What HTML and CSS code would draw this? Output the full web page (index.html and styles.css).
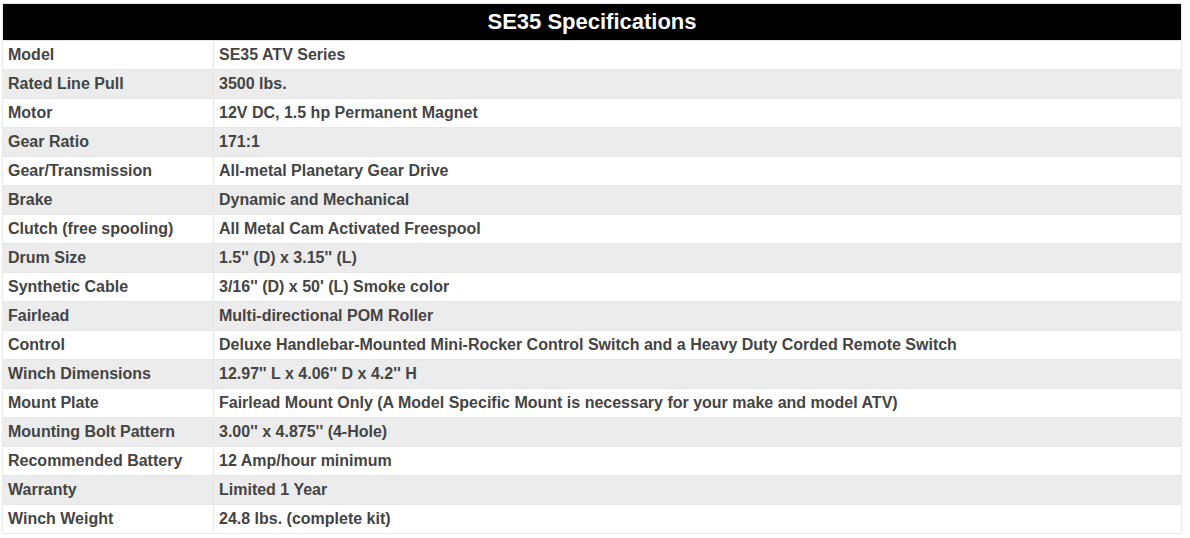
FILE: index.html
```html
<!DOCTYPE html>
<html>
<head>
<meta charset="utf-8">
<link rel="stylesheet" href="styles.css">
</head>
<body>
<table class="specs">
  <colgroup><col class="c-label"><col class="c-value"></colgroup>
  <thead>
    <tr><th colspan="2">SE35 Specifications</th></tr>
  </thead>
  <tbody>
    <tr><td>Model</td><td>SE35 ATV Series</td></tr>
    <tr><td>Rated Line Pull</td><td>3500 lbs.</td></tr>
    <tr><td>Motor</td><td>12V DC, 1.5 hp Permanent Magnet</td></tr>
    <tr><td>Gear Ratio</td><td>171:1</td></tr>
    <tr><td>Gear/Transmission</td><td>All-metal Planetary Gear Drive</td></tr>
    <tr><td>Brake</td><td>Dynamic and Mechanical</td></tr>
    <tr><td>Clutch (free spooling)</td><td>All Metal Cam Activated Freespool</td></tr>
    <tr><td>Drum Size</td><td>1.5'' (D) x 3.15'' (L)</td></tr>
    <tr><td>Synthetic Cable</td><td>3/16'' (D) x 50' (L) Smoke color</td></tr>
    <tr><td>Fairlead</td><td>Multi-directional POM Roller</td></tr>
    <tr><td>Control</td><td>Deluxe Handlebar-Mounted Mini-Rocker Control Switch and a Heavy Duty Corded Remote Switch</td></tr>
    <tr><td>Winch Dimensions</td><td>12.97'' L x 4.06'' D x 4.2'' H</td></tr>
    <tr><td>Mount Plate</td><td>Fairlead Mount Only (A Model Specific Mount is necessary for your make and model ATV)</td></tr>
    <tr><td>Mounting Bolt Pattern</td><td>3.00'' x 4.875'' (4-Hole)</td></tr>
    <tr><td>Recommended Battery</td><td>12 Amp/hour minimum</td></tr>
    <tr><td>Warranty</td><td>Limited 1 Year</td></tr>
    <tr><td>Winch Weight</td><td>24.8 lbs. (complete kit)</td></tr>
  </tbody>
</table>
</body>
</html>
```

FILE: styles.css
```css
html, body {
  margin: 0;
  background: #fff;
}
body {
  padding: 3px 0 0 2px;
  font-family: "Liberation Sans", Arial, sans-serif;
}
.specs {
  width: 1180px;
  border-collapse: collapse;
  table-layout: fixed;
  font-size: 16px;
  font-weight: bold;
  color: #444;
}
.c-label { width: 211px; }
.specs th {
  background: #000;
  color: #fff;
  font-size: 22px;
  font-weight: bold;
  height: 36px;
  padding: 0;
  border: 1px solid #e8e8e8;
  text-align: center;
  vertical-align: middle;
}
.specs td {
  height: 28px;
  padding: 0 5px;
  border: 1px solid #e8e8e8;
  text-align: left;
  vertical-align: middle;
  white-space: nowrap;
}
.specs tbody tr:nth-child(even) td {
  background: #ececec;
}
```
